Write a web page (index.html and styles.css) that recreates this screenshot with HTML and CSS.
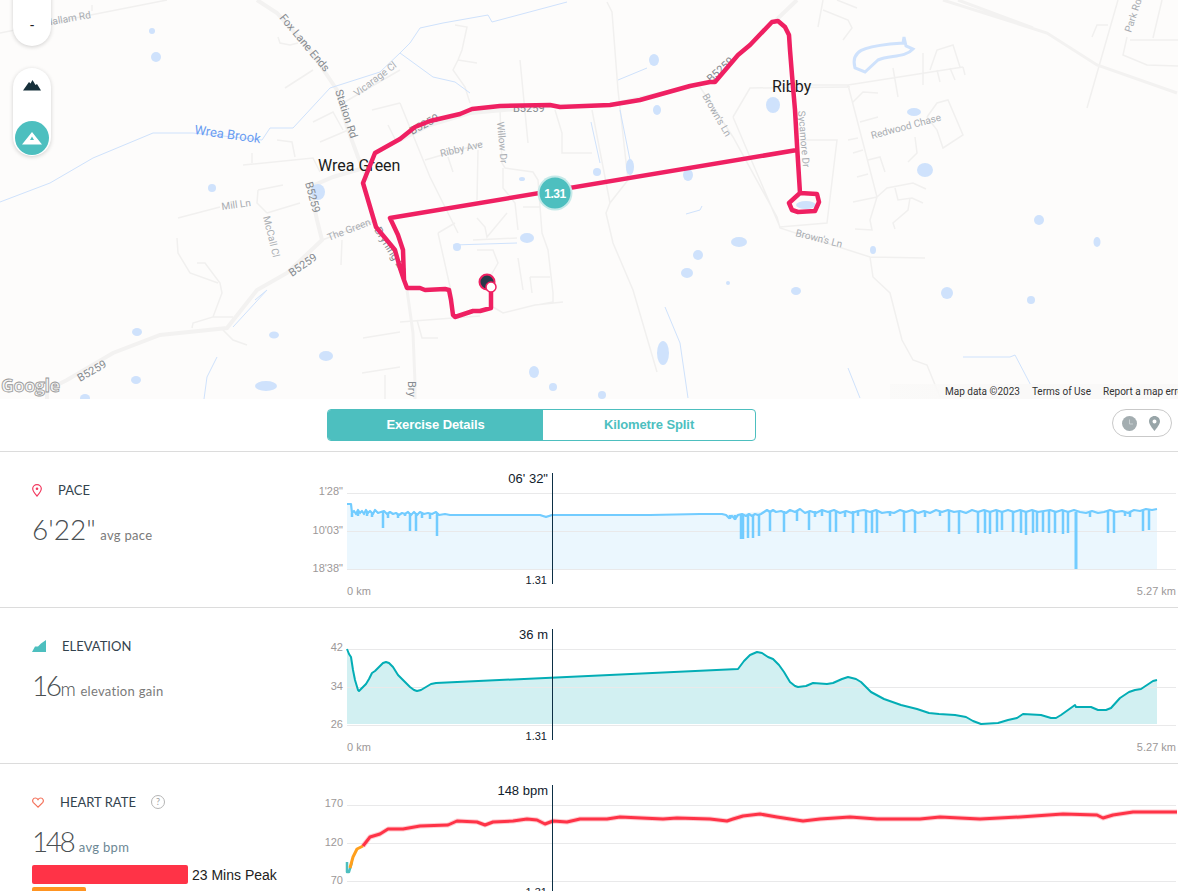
FILE: index.html
```html
<!DOCTYPE html>
<html lang="en">
<head>
    <meta charset="UTF-8">
    <meta name="viewport" content="width=device-width, initial-scale=1.0">
    <title>Exercise Details</title>
    <link rel="stylesheet" href="styles.css">
</head>
<body>

<div class="map">
    <svg class="map-canvas" width="1178" height="399" viewBox="0 0 1178 399">
        <!-- minor roads -->
        <path class="road" d="M0 33L50 23L167 0M92 5V11M278 37L280 43L290 45L298 43M285 88L313 70M313 122L333 112L343 130M320 142L353 128M243 165L313 158L320 172M252 153V163M277 140L292 142L295 157M178 218L220 207M267 213L300 203M258 190L283 185M258 190L257 203L267 213M322 240L377 220M342 240L341 265M177 238L178 253L190 273L218 283M197 263L205 263L220 283L222 293L213 317L193 323L192 328M213 317H233M223 330L233 340L247 345M363 338L400 332M362 373L400 367M385 375V399M388 125L397 143M372 110L400 103M343 103L400 70"/>
        <path class="road" d="M607 2L612 12L618 90L628 180L610 203L606 213L613 243L633 290L657 372M592 110L610 203M520 60L528 143M555 110L562 133V153H592M500 110L502 163L505 168L533 172L538 180L542 233L548 250L553 293V302L537 305M503 168V188L515 203L518 230M523 207H540M400 103L430 177L458 233M425 160L483 143M448 157L453 172M478 150L477 200M438 233L455 223M438 233L453 300M477 218L485 227L487 237L507 213M473 240L517 238M477 250H493L498 263L490 277M518 258L523 290M530 277H550M530 277L532 293M493 307L503 313L535 305L563 302M400 322L453 318L480 316M417 320L422 338H438M455 25L467 27L462 50L458 60L453 70L465 87L470 103M458 60L477 63"/>
        <path class="road" d="M733 117L750 88L850 87M733 117L747 150L780 227L827 223L837 140H797M700 87L733 137L777 217L780 228L817 240L870 257L925 258M870 257L873 277L890 293L902 340L913 360L927 365L940 397M780 85H848L963 67M848 85L877 197L870 220L872 230L855 229M877 197L853 202M877 197L887 188L913 183L926 189M895 188L898 200L912 198L923 203M910 198L908 210L893 223L895 229M848 140L858 138M860 122L878 117M853 153L863 150M857 177L868 174M868 160L880 157L885 172M852 103L863 92L878 93M923 53V85M893 68L898 97M937 70L940 82M950 68L955 80M963 67L965 75M930 70L937 50L953 45L960 67M927 117L937 103L948 100L963 135L943 148L937 130L927 117M915 137L917 153L908 162M823 0L818 27M823 10L848 20L852 28L843 40M837 0L857 8M1092 37L1097 25H1108M1118 0L1087 108M1162 0L1153 38M1130 40H1178M1127 37L1123 55L1147 65L1178 66"/>
        <!-- main roads -->
        <path class="road-main" d="M257 0L277 13L310 50L337 90L347 127L358 157L368 180M367 167L333 177L310 187L317 220L322 240L287 273L257 290L227 328L160 335L113 353L67 380L47 390V399M773 23L797 0M400 140L430 125L470 113L550 106L610 105L690 87"/>
        <path class="road-main thin" d="M407 290L413 333L415 383V399M943 0L1047 33L1097 65L1177 93M958 0L1033 28"/>
        <!-- water -->
        <path class="stream" d="M0 202L50 183L93 158L153 133H193L262 140L270 128H293L330 88L380 72L400 53L410 43L420 28L443 23L488 15L492 22L567 2M400 53L433 77L455 82L470 93M255 300L267 290L233 327M217 357L207 377L204 399M453 245L517 243M591 122L600 163M620 110L630 160M618 80L647 68M665 307L680 343L688 398M963 357L1010 357L1015 355L1037 397M848 368L860 398M686 214L700 210L702 206"/>
        <path class="lake" d="M855 68C850 50 865 47 890 44L903 43L904 37L906 46L913 49C905 58 890 55 878 60L865 72Z"/>
        <g class="pond">
            <ellipse cx="152" cy="31" rx="3" ry="3"/><ellipse cx="156" cy="57" rx="5" ry="5"/><ellipse cx="212" cy="188" rx="4" ry="4"/>
            <ellipse cx="318" cy="192" rx="7" ry="8"/><ellipse cx="137" cy="332" rx="5" ry="4"/><ellipse cx="274" cy="335" rx="5" ry="3.5"/>
            <ellipse cx="326" cy="356" rx="7" ry="5"/><ellipse cx="136" cy="380" rx="5" ry="4"/><ellipse cx="266" cy="386" rx="11" ry="5"/>
            <ellipse cx="85" cy="398" rx="5" ry="4"/><ellipse cx="654" cy="60" rx="5" ry="6"/><ellipse cx="657" cy="110" rx="4" ry="5"/>
            <ellipse cx="522" cy="179" rx="3" ry="2"/><ellipse cx="597" cy="172" rx="4" ry="4"/><ellipse cx="630" cy="167" rx="4" ry="8"/>
            <ellipse cx="688" cy="175" rx="5" ry="6"/><ellipse cx="527" cy="238" rx="7" ry="5"/><ellipse cx="457" cy="247" rx="4" ry="4"/>
            <ellipse cx="773" cy="105" rx="7" ry="8"/><ellipse cx="806" cy="205" rx="10" ry="4"/><ellipse cx="739" cy="242" rx="8" ry="5"/>
            <ellipse cx="698" cy="255" rx="5" ry="5"/><ellipse cx="687" cy="273" rx="6" ry="5"/><ellipse cx="796" cy="291" rx="5" ry="4"/>
            <ellipse cx="728" cy="283" rx="2" ry="2"/><ellipse cx="663" cy="353" rx="6" ry="12"/><ellipse cx="534" cy="372" rx="5" ry="6"/>
            <ellipse cx="553" cy="387" rx="4" ry="4"/><ellipse cx="602" cy="395" rx="4" ry="4"/><ellipse cx="914" cy="112" rx="7" ry="4"/>
            <ellipse cx="925" cy="170" rx="8" ry="7"/><ellipse cx="873" cy="250" rx="3" ry="4"/><ellipse cx="947" cy="293" rx="6" ry="6"/>
            <ellipse cx="1031" cy="300" rx="4" ry="4"/><ellipse cx="1097" cy="242" rx="3.5" ry="5"/><ellipse cx="1039" cy="220" rx="5" ry="5"/>
            <ellipse cx="977" cy="397" rx="5" ry="3"/>
        </g>
        <!-- labels -->
        <text class="road-label" transform="translate(46 26) rotate(-10)">Hallam Rd</text>
        <text class="road-label dark" transform="translate(279 18) rotate(50)">Fox Lane Ends</text>
        <text class="road-label dark" transform="translate(335 91) rotate(72)">Station Rd</text>
        <text class="road-label" transform="translate(357 97) rotate(-37)">Vicarage Cl</text>
        <text class="road-label" transform="translate(441 157) rotate(-13)">Ribby Ave</text>
        <text class="road-label" transform="translate(497 122) rotate(85)">Willow Dr</text>
        <text class="road-label" transform="translate(702 96) rotate(60)">Brown's Ln</text>
        <text class="road-label" transform="translate(795 236) rotate(14)">Brown's Ln</text>
        <text class="road-label" transform="translate(798 111) rotate(85)">Sycamore Dr</text>
        <text class="road-label" transform="translate(872 139) rotate(-15)">Redwood Chase</text>
        <text class="road-label" transform="translate(1131 33) rotate(-72)">Park Rd</text>
        <text class="road-label" transform="translate(222 210) rotate(-8)">Mill Ln</text>
        <text class="road-label" transform="translate(263 217) rotate(76)">McCall Cl</text>
        <text class="road-label" transform="translate(329 241) rotate(-21)">The Green</text>
        <text class="road-label dark" transform="translate(374 230) rotate(58)">Bryning Ln</text>
        <text class="road-label dark" transform="translate(408 381) rotate(90)">Bry</text>
        <text class="road-label dark" transform="translate(305 183) rotate(75)">B5259</text>
        <text class="road-label dark" transform="translate(292 277) rotate(-35)">B5259</text>
        <text class="road-label dark" transform="translate(80 382) rotate(-30)">B5259</text>
        <text class="road-label dark" transform="translate(412 135) rotate(-28)">B5259</text>
        <text class="road-label dark" transform="translate(513 112)">B5259</text>
        <text class="road-label dark" transform="translate(711 83) rotate(-42)">B5259</text>
        <text class="brook-label" transform="translate(194 134) rotate(8)">Wrea Brook</text>
        <text class="place-label" x="318" y="171">Wrea Green</text>
        <text class="place-label" x="772" y="92">Ribby</text>
        <text class="google" x="1" y="392">Google</text>
        <!-- route -->
        <path class="route" d="M491 290V308L480 311H473L455 317L453 315L451 300L449 290L445 289L425 290L420 288L407 288L404 280L403 250L398 235L390 218L797 150M404 280L400 268L395 250L376 227L363 183L375 153L400 139L415 127L430 121L460 114L472 109L500 106L550 105L560 107L610 105L640 100L690 86L710 82L715 82L738 55L750 45L772 22L778 21L785 27L789 35L790 50L792 75L795 110L797 145L800 193L789 203L792 210L798 212L815 211L819 202L817 194L800 193"/>
        <circle class="marker-end" cx="487" cy="282" r="7.5"/>
        <circle class="marker-start" cx="491" cy="287" r="5"/>
        <circle class="badge-ring" cx="555" cy="193" r="17.5"/>
        <circle class="badge" cx="555" cy="193" r="15.5"/>
        <text class="badge-text" x="555" y="198">1.31</text>
    </svg>

    <div class="map-btn zoom-btn">-</div>
    <div class="map-btn terrain-btn">
        <svg width="18" height="11" viewBox="0 0 18 11"><path fill="#16303a" d="M0 10.5L6 2L7.5 3.5L9.5 0L12.5 5L14 4L18 10.5Z"/></svg>
        <div class="terrain-on">
            <svg width="20" height="13" viewBox="0 0 20 13"><path fill="#fff" fill-rule="evenodd" d="M10 0L20 12.5H0ZM10 4.5L8 8H12Z"/></svg>
        </div>
    </div>
    <div class="attribution">
        <span>Map data ©2023</span>
        <span>Terms of Use</span>
        <span>Report a map error</span>
    </div>
</div>

<div class="toolbar">
    <div class="tabs">
        <div class="tab active">Exercise Details</div>
        <div class="tab">Kilometre Split</div>
    </div>
    <div class="view-toggle">
        <svg width="15" height="15" viewBox="0 0 15 15"><circle cx="7.5" cy="7.5" r="7.5" fill="#a3adb0"/><path d="M7.5 3.5V8H11" fill="none" stroke="#c9d0d2" stroke-width="1"/></svg>
        <svg width="11" height="15" viewBox="0 0 11 15"><path fill="#98a5a8" fill-rule="evenodd" d="M5.5 0C8.5 0 11 2.3 11 5.3C11 8.5 7.5 12.5 5.5 15C3.5 12.5 0 8.5 0 5.3C0 2.3 2.5 0 5.5 0ZM5.5 3.5A2 2 0 1 0 5.5 7.5A2 2 0 1 0 5.5 3.5Z"/></svg>
    </div>
</div>

<div class="row">
    <div class="stats">
        <div class="stat-title">
            <svg width="10" height="13" viewBox="0 0 10 13"><path fill="none" stroke="#f2395f" stroke-width="1.2" d="M5 .7C7.4 .7 9.3 2.5 9.3 4.8C9.3 7.2 6.6 10.2 5 12.1C3.4 10.2 .7 7.2 .7 4.8C.7 2.5 2.6 .7 5 .7Z"/><circle cx="5" cy="4.8" r="1.3" fill="#f2395f"/></svg>
            <span>PACE</span>
        </div>
        <div class="stat-value">6'22" <small>avg pace</small></div>
    </div>
    <svg class="chart" width="878" height="155" viewBox="300 452 878 155">
        <path class="area-pace" d="M347 504H351L352 514L440 515L722 515L767 511L1157 510V569H347Z"/>
        <path class="grid" d="M347 493H1176M347 531H1176M347 569H1176"/>
        <path class="line-pace" d="M347 504H351L352 513L354 511L356 514L358 510L360 513L362 511L364 514L366 510L368 513L370 511L373 514L375 510L378 513L381 512L384 511L387 514L390 512L393 514L396 513L399 515L402 513L405 514L408 512L411 515L414 512L417 515L420 512L424 514L428 513L432 514L436 512L439 515L445 514L450 515L470 515L500 515L540 515L546 517L552 515L600 515L650 515L700 514L722 514L726 515L729 518L732 516L735 519L738 515L742 514L746 516L749 514L752 516L755 514L758 515L761 514L764 512L767 510L770 512L773 510L776 512L781 511L786 513L790 510L795 512L800 509L805 513L810 511L816 513L822 510L828 512L834 510L840 513L846 511L852 513L858 511L864 510L870 512L876 510L882 513L888 512L894 513L900 510L906 512L912 510L918 513L924 511L930 513L936 510L942 512L948 510L954 512L960 511L966 513L972 510L978 512L984 510L990 512L996 510L1002 512L1008 510L1014 512L1020 510L1026 512L1032 510L1038 512L1044 511L1050 510L1056 512L1062 510L1068 512L1074 510L1080 512L1086 513L1092 511L1098 513L1104 512L1110 510L1116 512L1122 511L1128 513L1134 510L1140 511L1146 509L1152 510L1157 509"/>
        <path class="spikes" d="M383 512V528M410 513V531M416 513V531M437 513V536M352 513V517M358 512V516M367 511V516M372 513V517M388 513V518M398 514V518M405 513V516M422 513V518M430 513V519M741 515V539M743 515V539M748 515V538M753 515V538M759 515V536M730 515V519M735 515V520M770 511V531M784 511V532M797 511V521M809 511V530M830 511V532M836 511V532M853 511V533M866 511V533M872 511V533M877 511V533M904 511V532M915 511V533M949 511V532M959 511V534M978 511V533M985 511V533M990 511V534M997 511V532M1002 511V530M1013 511V532M1021 511V533M1026 511V535M1033 511V533M1037 511V532M1043 511V532M1049 511V533M1055 511V533M1063 511V534M1068 511V533M1108 511V533M1114 511V533M1143 510V531M1149 510V530M815 511V517M822 511V516M845 511V517M858 511V516M890 511V516M925 511V517M940 511V516M1090 512V517M1125 512V516M1130 512V517"/>
        <path class="spike-wide" d="M1076 512V569"/>
        <text class="axis" x="343" y="495">1'28"</text>
        <text class="axis" x="343" y="534">10'03"</text>
        <text class="axis" x="343" y="572">18'38"</text>
        <text class="axis start" x="347" y="595">0 km</text>
        <text class="axis" x="1176" y="595">5.27 km</text>
        <path class="cursor" d="M552.5 473V584"/>
        <text class="cursor-value" x="548" y="483">06' 32"</text>
        <text class="cursor-km" x="547" y="584">1.31</text>
    </svg>
</div>

<div class="row">
    <div class="stats">
        <div class="stat-title">
            <svg width="14" height="12" viewBox="0 0 14 12"><path fill="#4dbfbf" d="M0 12L3 6.5H6L9 3.5L14 0V12Z"/></svg>
            <span>ELEVATION</span>
        </div>
        <div class="stat-value"><span class="tight">16</span><em>m</em> <small>elevation gain</small></div>
    </div>
    <svg class="chart" width="878" height="155" viewBox="300 608 878 155">
        <path class="area-elev" d="M347 649L349 654L351 657L353 670L355 680L358 690L359 691L363 687L366 684L369 679L372 673L375 671L379 667L383 663L386 662L389 663L393 667L398 675L404 681L410 687L414 690L417 691L421 690L426 687L431 684L436 683L738 669L744 661L750 655L757 652L762 653L768 657L773 659L779 665L784 672L790 682L795 686L798 687L806 686L813 683L827 684L833 683L842 679L848 677L856 679L861 682L871 692L884 699L901 705L917 709L929 713L939 714L955 715L966 717L973 721L981 724L998 723L1008 720L1017 718L1023 714L1041 715L1051 718L1056 718L1061 715L1075 705L1076 707L1091 707L1098 710L1106 710L1111 708L1120 698L1129 692L1135 690L1141 689L1147 685L1153 681L1157 680V724H347Z"/>
        <path class="grid" d="M347 649H1176M347 687H1176M347 725H1176"/>
        <path class="line-elev" d="M347 649L349 654L351 657L353 670L355 680L358 690L359 691L363 687L366 684L369 679L372 673L375 671L379 667L383 663L386 662L389 663L393 667L398 675L404 681L410 687L414 690L417 691L421 690L426 687L431 684L436 683L738 669L744 661L750 655L757 652L762 653L768 657L773 659L779 665L784 672L790 682L795 686L798 687L806 686L813 683L827 684L833 683L842 679L848 677L856 679L861 682L871 692L884 699L901 705L917 709L929 713L939 714L955 715L966 717L973 721L981 724L998 723L1008 720L1017 718L1023 714L1041 715L1051 718L1056 718L1061 715L1075 705L1076 707L1091 707L1098 710L1106 710L1111 708L1120 698L1129 692L1135 690L1141 689L1147 685L1153 681L1157 680"/>
        <text class="axis" x="343" y="651">42</text>
        <text class="axis" x="343" y="690">34</text>
        <text class="axis" x="343" y="728">26</text>
        <text class="axis start" x="347" y="751">0 km</text>
        <text class="axis" x="1176" y="751">5.27 km</text>
        <path class="cursor" d="M552.5 629V740"/>
        <text class="cursor-value" x="548" y="639">36 m</text>
        <text class="cursor-km" x="547" y="740">1.31</text>
    </svg>
</div>

<div class="row">
    <div class="stats">
        <div class="stat-title">
            <svg width="12" height="11" viewBox="0 0 12 11"><path fill="none" stroke="#f4715a" stroke-width="1.2" d="M6 10.2L1.4 5.6C-.2 3.8 1 1 3.3 1C4.5 1 5.4 1.7 6 2.6C6.6 1.7 7.5 1 8.7 1C11 1 12.2 3.8 10.6 5.6Z"/></svg>
            <span>HEART RATE</span>
            <span class="help">?</span>
        </div>
        <div class="stat-value"><span class="tight">148</span> <small class="bpm">avg bpm</small></div>
        <div class="zone"><div class="zone-bar peak"></div><span>23 Mins Peak</span></div>
        <div class="zone"><div class="zone-bar cardio"></div></div>
    </div>
    <svg class="chart" width="878" height="155" viewBox="300 764 878 155">
        <path class="grid" d="M347 805H1176M347 843H1176M347 881H1176"/>
        <path class="line-heart-zone1" d="M347 862V872H349L352 862"/>
        <path class="line-heart-zone2" d="M350 868L353 857L357 849L363 846"/>
        <path class="line-heart-glow" d="M363 846L370 837L380 834L388 829L403 829L420 826L448 825L457 821L477 822L485 825L493 822L513 821L527 819L537 820L545 824L553 821L567 822L580 819L607 819L620 817L663 819L677 818L710 819L727 821L733 819L743 816L760 814L777 817L803 821L820 819L850 817L877 819L920 819L940 817L980 819L1020 817L1063 814L1097 815L1103 818L1113 815L1133 812L1177 812"/>
        <path class="line-heart" d="M363 846L370 837L380 834L388 829L403 829L420 826L448 825L457 821L477 822L485 825L493 822L513 821L527 819L537 820L545 824L553 821L567 822L580 819L607 819L620 817L663 819L677 818L710 819L727 821L733 819L743 816L760 814L777 817L803 821L820 819L850 817L877 819L920 819L940 817L980 819L1020 817L1063 814L1097 815L1103 818L1113 815L1133 812L1177 812"/>
        <text class="axis" x="343" y="807">170</text>
        <text class="axis" x="343" y="846">120</text>
        <text class="axis" x="343" y="884">70</text>
        <path class="cursor" d="M552.5 785V896"/>
        <text class="cursor-value" x="548" y="795">148 bpm</text>
        <text class="cursor-km" x="547" y="896">1.31</text>
    </svg>
</div>

</body>
</html>
```

FILE: styles.css
```css
html, body {
    height: 100%;
    overflow: hidden;
}

body {
    margin: 0;
    background: #fff;
    font-family: Lato, "Liberation Sans", sans-serif;
    color: #33434e;
}

/* map */
.map {
    position: relative;
    height: 399px;
    overflow: hidden;
    background: #fdfcfb;
}

.map-canvas {
    display: block;
}

.road, .road-main, .stream, .lake, .route, .grid, .cursor {
    fill: none;
}

.road {
    stroke: #f1f0ef;
    stroke-width: 1.5;
}

.road-main {
    stroke: #f3f2f1;
    stroke-width: 4;
}

.road-main.thin {
    stroke-width: 3;
}

.stream {
    stroke: #cfe2fc;
    stroke-width: 1;
}

.lake {
    stroke: #cfe2fc;
    stroke-width: 3;
}

.pond {
    fill: #cfe2fc;
}

.road-label {
    font-family: Roboto, sans-serif;
    font-size: 10px;
    fill: #a9adb2;
}

.road-label.dark {
    fill: #868b90;
    font-size: 11px;
}

.brook-label {
    font-family: Roboto, sans-serif;
    font-size: 13px;
    fill: #6a9cf2;
}

.place-label {
    font-family: Roboto, sans-serif;
    font-size: 16px;
    fill: #1c1c1c;
}

.google {
    font-family: "Open Sans", sans-serif;
    font-size: 18px;
    font-weight: 700;
    letter-spacing: -.5px;
    fill: #f6f6f6;
    stroke: #979797;
    stroke-width: .8;
}

.route {
    stroke: #ef2062;
    stroke-width: 4.5;
    stroke-linejoin: round;
    stroke-linecap: round;
}

.marker-end {
    fill: #263a4a;
    stroke: #ef2062;
    stroke-width: 2;
}

.marker-start {
    fill: #fff;
    stroke: #ef2062;
    stroke-width: 1.5;
}

.badge-ring {
    fill: #c5e9e8;
}

.badge {
    fill: #4dbfbf;
}

.badge-text {
    font-family: "Liberation Sans", sans-serif;
    font-size: 12px;
    font-weight: 700;
    letter-spacing: -.5px;
    fill: #fff;
    text-anchor: middle;
}

.map-btn {
    position: absolute;
    left: 13px;
    width: 38px;
    background: #fff;
    border-radius: 19px;
    box-shadow: 0 1px 4px rgba(0, 0, 0, .18);
}

.zoom-btn {
    top: -20px;
    height: 66px;
    line-height: 90px;
    text-align: center;
    font-family: "Liberation Sans", sans-serif;
    font-size: 14px;
    color: #222;
}

.terrain-btn {
    top: 68px;
    height: 88px;
    display: flex;
    flex-direction: column;
    align-items: center;
    padding-top: 12px;
    box-sizing: border-box;
    gap: 30px;
}

.terrain-on {
    width: 34px;
    height: 34px;
    flex: none;
    border-radius: 50%;
    background: #4dbfbf;
    display: flex;
    align-items: center;
    justify-content: center;
}

.attribution {
    position: absolute;
    right: 0;
    bottom: 0;
    width: 288px;
    height: 15px;
    box-sizing: border-box;
    padding-left: 55px;
    display: flex;
    gap: 12px;
    overflow: hidden;
    white-space: nowrap;
    background: linear-gradient(to right, rgba(245, 245, 244, .3), #faf9f8 20%);
    font-family: Roboto, sans-serif;
    font-size: 10px;
    line-height: 15px;
    color: #333;
}

/* tabs */
.toolbar {
    height: 42px;
    border-bottom: 1px solid #dcdcdc;
    display: flex;
    padding: 10px 6px 0 327px;
}

.tabs {
    display: flex;
    width: 429px;
    height: 32px;
    box-sizing: border-box;
    border: 1px solid #4dbfbf;
    border-radius: 4px;
    overflow: hidden;
}

.tab {
    flex: 1;
    text-align: center;
    font-family: "Liberation Sans", sans-serif;
    font-size: 13px;
    font-weight: 700;
    letter-spacing: -.1px;
    line-height: 29px;
    color: #4dbfbf;
}

.tab.active {
    flex: none;
    width: 215px;
    background: #4dbfbf;
    color: #fff;
}

.view-toggle {
    margin-left: auto;
    width: 60px;
    height: 28px;
    box-sizing: border-box;
    padding-left: 9px;
    border: 1px solid #c9c9c9;
    border-radius: 14px;
    display: flex;
    align-items: center;
    gap: 12px;
}

/* rows */
.row {
    display: flex;
    height: 155px;
    border-bottom: 1px solid #dcdcdc;
}

.stats {
    width: 300px;
    flex: none;
    box-sizing: border-box;
    padding: 31px 0 0 32px;
}

.stat-title {
    display: flex;
    align-items: center;
    gap: 16px;
    height: 14px;
    font-size: 13px;
}

.help {
    width: 12px;
    height: 12px;
    margin-left: -1px;
    border: 1px solid #b5b5b5;
    border-radius: 50%;
    text-align: center;
    font-size: 9px;
    line-height: 12px;
    color: #a0a0a0;
}

.stat-value {
    margin-top: 16px;
    height: 33px;
    font-size: 28px;
    font-weight: 300;
    line-height: 33px;
    color: #4a4f52;
    white-space: nowrap;
}

.stat-value em {
    font-style: normal;
    font-size: 19px;
}

.stat-value .tight {
    letter-spacing: -2.5px;
    margin-right: 1px;
}

.stat-value small {
    margin-left: -3px;
    font-size: 13px;
    font-weight: 400;
    letter-spacing: .3px;
    color: #7a7a7a;
}

.stat-value small.bpm {
    color: #6d8794;
}

.zone {
    display: flex;
    align-items: center;
    gap: 4px;
    height: 19px;
    margin-top: 3px;
    font-family: "Liberation Sans", sans-serif;
    font-size: 14px;
    color: #222;
}

.stat-value + .zone {
    margin-top: 7px;
}

.zone-bar {
    height: 19px;
    border-radius: 2px;
}

.zone-bar.peak {
    width: 156px;
    background: #ff3347;
}

.zone-bar.cardio {
    width: 54px;
    background: #ff9421;
}

/* charts */
.chart {
    display: block;
    flex: none;
}

.grid {
    stroke: #e9e9ea;
    stroke-width: 1;
    shape-rendering: crispEdges;
}

.area-pace {
    fill: #ebf7fe;
}

.area-elev {
    fill: #d2f0f2;
}

.line-pace, .line-elev, .line-heart, .line-heart-glow,
.line-heart-zone1, .line-heart-zone2, .spikes, .spike-wide {
    fill: none;
    stroke-linejoin: round;
}

.line-pace {
    stroke: #72ccff;
    stroke-width: 2.2;
}

.spikes {
    stroke: #72ccff;
    stroke-width: 2.5;
}

.spike-wide {
    stroke: #72ccff;
    stroke-width: 3;
}

.line-elev {
    stroke: #03adb5;
    stroke-width: 2;
}

.line-heart {
    stroke: #ff3347;
    stroke-width: 3;
}

.line-heart-glow {
    stroke: #ff3347;
    stroke-width: 5;
    stroke-opacity: .25;
}

.line-heart-zone1 {
    stroke: #4dbfbf;
    stroke-width: 2.5;
}

.line-heart-zone2 {
    stroke: #ff9f1c;
    stroke-width: 3;
}

.axis {
    font-family: "Liberation Sans", sans-serif;
    font-size: 11px;
    fill: #9c9898;
    text-anchor: end;
}

.axis.start {
    text-anchor: start;
}

.cursor {
    stroke: #0c2f45;
    stroke-width: 1;
    shape-rendering: crispEdges;
}

.cursor-value, .cursor-km {
    font-family: "Liberation Sans", sans-serif;
    fill: #10202b;
    text-anchor: end;
}

.cursor-value {
    font-size: 13px;
}

.cursor-km {
    font-size: 11px;
}
```
